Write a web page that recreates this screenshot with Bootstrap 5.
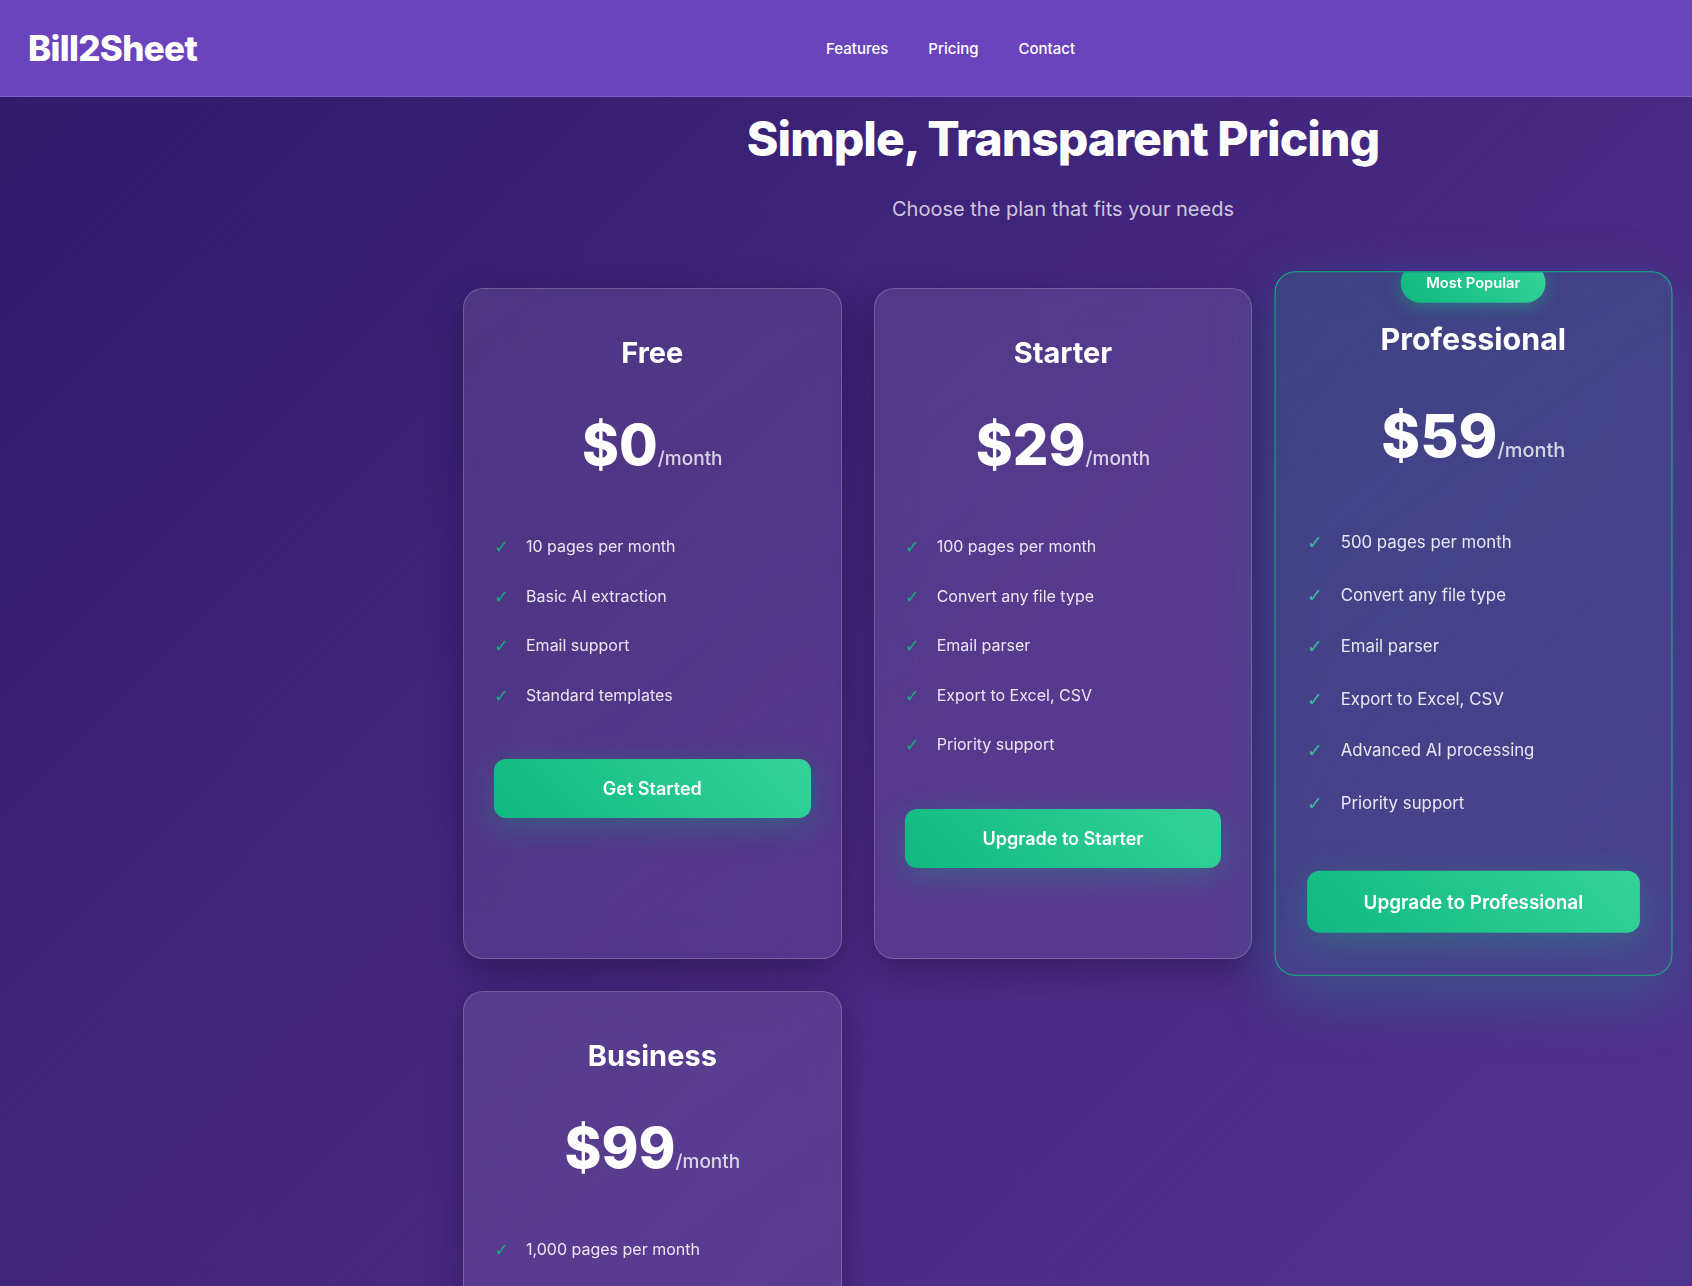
<!DOCTYPE html>
<html lang="en">
<head>
<meta charset="utf-8">
<meta name="viewport" content="width=device-width, initial-scale=1">
<title>Bill2Sheet – Pricing</title>
<link href="https://cdn.jsdelivr.net/npm/bootstrap@5.3.0/dist/css/bootstrap.min.css" rel="stylesheet">
<style>
  :root { --mint: #10b981; --mint-light: #34d399; }
  html { background: #2d1b69; }
  body {
    font-family: Inter, "Liberation Sans", sans-serif;
    line-height: 1.6;
    color: #fff;
    height: 100vh;
    overflow: hidden;
    background: linear-gradient(135deg, #2d1b69 0%, #4a2a87 50%, #553c9a 100%) 0 0 / 100% 170vh no-repeat;
  }
  .site-header {
    height: 97px;
    padding: 0 28px;
    gap: 40px;
    background: #6b44bd;
    border-bottom: 1px solid #7f5fc8;
  }
  .brand-name { font-size: 35px; font-weight: 800; letter-spacing: -0.02em; }
  .site-nav { gap: 40px; padding-top: 2px; }
  .site-nav .nav-link { padding: 0; color: #fff; font-size: 15px; font-weight: 500; }

  .pricing { padding: 12px 0 32px 434px; }
  .pricing-inner { max-width: 1200px; margin: 0 auto; }
  .pricing-title { font-size: 48px; font-weight: 800; line-height: 60px; margin-bottom: 24px; letter-spacing: -0.02em; }
  .pricing-sub { font-size: 20px; line-height: 32px; margin-bottom: 63px; color: rgba(255,255,255,.75); }
  .plans { --bs-gutter-x: 32px; --bs-gutter-y: 32px; }

  .plan {
    height: 100%;
    min-height: 640px;
    padding: 41px 30px 40px;
    border: 1px solid rgba(255,255,255,.2);
    border-radius: 20px;
    background: linear-gradient(145deg, rgba(255,255,255,.1), rgba(255,255,255,.07));
    box-shadow: 0 12px 36px rgba(0,0,0,.3);
    backdrop-filter: blur(20px);
    position: relative;
    overflow: hidden;
  }
  .plan-featured {
    border-color: var(--mint);
    background: linear-gradient(145deg, rgba(16,185,129,.17), rgba(16,185,129,.1)), rgba(255,255,255,.02);
    box-shadow: 0 20px 60px rgba(16,185,129,.25);
    transform: scale(1.05);
  }
  .plan-flag {
    position: absolute;
    top: -9px;
    left: 50%;
    transform: translateX(-50%);
    padding: 8px 24px;
    border-radius: 20px;
    font-size: 14px;
    font-weight: 600;
    white-space: nowrap;
    background: linear-gradient(45deg, var(--mint), var(--mint-light));
    box-shadow: 0 4px 16px rgba(16,185,129,.4);
  }
  .plan-name { font-size: 29px; font-weight: 700; line-height: 46px; margin-bottom: 24px; }
  .plan-price { font-size: 56px; font-weight: 800; line-height: 90px; margin-bottom: 32px; }
  .plan-price span { font-size: 19px; font-weight: 500; line-height: 1; color: rgba(255,255,255,.78); }
  .plan-list { margin-bottom: 39px; font-size: 16px; color: rgba(255,255,255,.88); }
  .plan-list li { padding: 12px 0; gap: 16px; }
  .plan-list li::before {
    content: "✓";
    width: 16px;
    color: var(--mint);
    font-family: "DejaVu Sans", sans-serif;
    font-size: 18px;
    line-height: 26px;
    height: 24px;
    opacity: .88;
  }
  .plan-featured .plan-list li::before { color: var(--mint-light); }
  .plan-btn {
    padding: 16px;
    border: 0;
    border-radius: 12px;
    color: #fff;
    font-size: 18px;
    font-weight: 600;
    line-height: 27px;
    background: linear-gradient(45deg, var(--mint), var(--mint-light));
    box-shadow: 0 8px 32px rgba(16,185,129,.3);
  }
  .plan-btn:hover { color: #fff; }
</style>
</head>
<body>
<header class="site-header d-flex align-items-center">
  <a class="brand-name text-white text-decoration-none" href="#">Bill2Sheet</a>
  <nav class="site-nav nav flex-grow-1 justify-content-center">
    <a class="nav-link" href="#features">Features</a>
    <a class="nav-link" href="#pricing">Pricing</a>
    <a class="nav-link" href="#contact">Contact</a>
  </nav>
</header>

<main class="pricing" id="pricing">
  <div class="pricing-inner">
    <h1 class="pricing-title text-center">Simple, Transparent Pricing</h1>
    <p class="pricing-sub text-center">Choose the plan that fits your needs</p>
    <div class="plans row row-cols-1 row-cols-lg-3">
      <div class="col">
        <section class="plan">
          <h2 class="plan-name text-center">Free</h2>
          <div class="plan-price text-center">$0<span>/month</span></div>
          <ul class="plan-list list-unstyled">
            <li class="d-flex">10 pages per month</li>
            <li class="d-flex">Basic AI extraction</li>
            <li class="d-flex">Email support</li>
            <li class="d-flex">Standard templates</li>
          </ul>
          <button type="button" class="plan-btn btn w-100">Get Started</button>
        </section>
      </div>
      <div class="col">
        <section class="plan">
          <h2 class="plan-name text-center">Starter</h2>
          <div class="plan-price text-center">$29<span>/month</span></div>
          <ul class="plan-list list-unstyled">
            <li class="d-flex">100 pages per month</li>
            <li class="d-flex">Convert any file type</li>
            <li class="d-flex">Email parser</li>
            <li class="d-flex">Export to Excel, CSV</li>
            <li class="d-flex">Priority support</li>
          </ul>
          <button type="button" class="plan-btn btn w-100">Upgrade to Starter</button>
        </section>
      </div>
      <div class="col">
        <section class="plan plan-featured">
          <div class="plan-flag">Most Popular</div>
          <h2 class="plan-name text-center">Professional</h2>
          <div class="plan-price text-center">$59<span>/month</span></div>
          <ul class="plan-list list-unstyled">
            <li class="d-flex">500 pages per month</li>
            <li class="d-flex">Convert any file type</li>
            <li class="d-flex">Email parser</li>
            <li class="d-flex">Export to Excel, CSV</li>
            <li class="d-flex">Advanced AI processing</li>
            <li class="d-flex">Priority support</li>
          </ul>
          <button type="button" class="plan-btn btn w-100">Upgrade to Professional</button>
        </section>
      </div>
      <div class="col">
        <section class="plan">
          <h2 class="plan-name text-center">Business</h2>
          <div class="plan-price text-center">$99<span>/month</span></div>
          <ul class="plan-list list-unstyled">
            <li class="d-flex">1,000 pages per month</li>
          </ul>
        </section>
      </div>
    </div>
  </div>
</main>
<script src="https://cdn.jsdelivr.net/npm/bootstrap@5.3.0/dist/js/bootstrap.bundle.min.js"></script>
</body>
</html>
